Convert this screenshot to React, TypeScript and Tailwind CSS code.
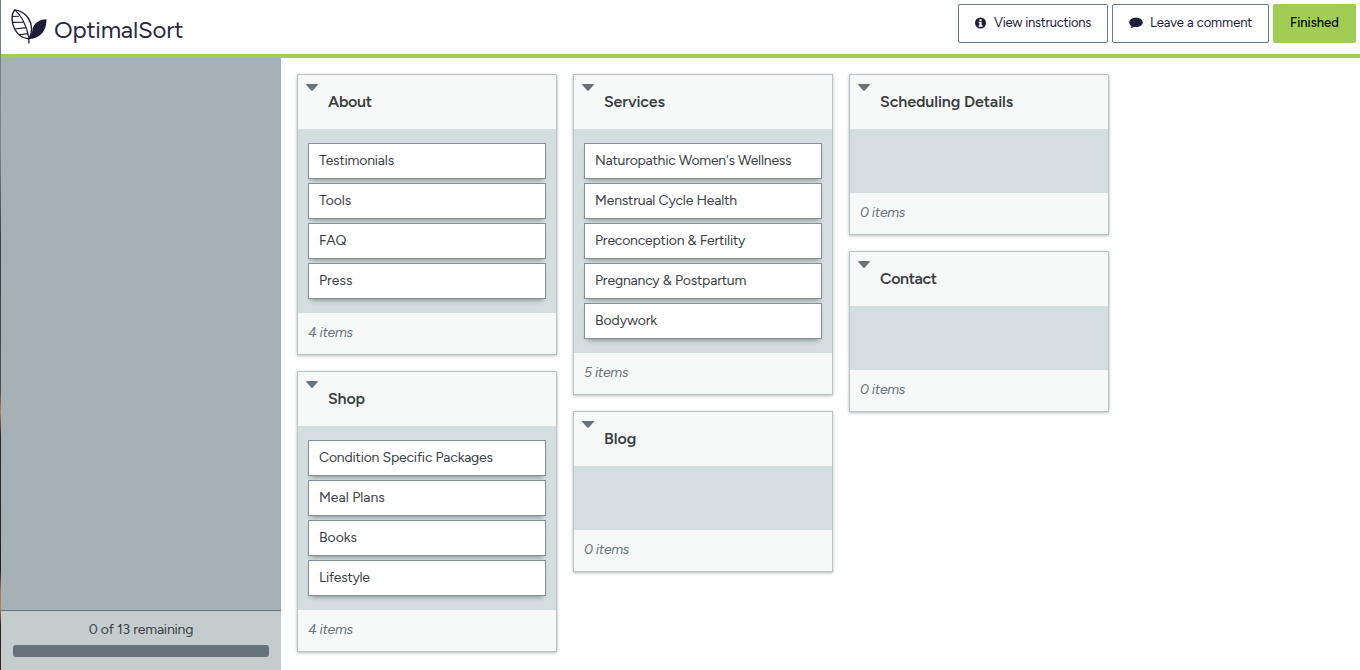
import React from "react";

type Item = { label: string; tracking: string };
type Group = { title: string; tracking: string; items: Item[] };

const columns: Group[][] = [
  [
    {
      title: "About",
      tracking: "tracking-[-0.3px]",
      items: [
        { label: "Testimonials", tracking: "tracking-[-0.2px]" },
        { label: "Tools", tracking: "tracking-[-0.1px]" },
        { label: "FAQ", tracking: "tracking-[-0.3px]" },
        { label: "Press", tracking: "tracking-[0px]" },
      ],
    },
    {
      title: "Shop",
      tracking: "tracking-[-0.2px]",
      items: [
        { label: "Condition Specific Packages", tracking: "tracking-[-0.19px]" },
        { label: "Meal Plans", tracking: "tracking-[0px]" },
        { label: "Books", tracking: "tracking-[0px]" },
        { label: "Lifestyle", tracking: "tracking-[-0.28px]" },
      ],
    },
  ],
  [
    {
      title: "Services",
      tracking: "tracking-[-0.15px]",
      items: [
        { label: "Naturopathic Women's Wellness", tracking: "tracking-[-0.23px]" },
        { label: "Menstrual Cycle Health", tracking: "tracking-[-0.18px]" },
        { label: "Preconception & Fertility", tracking: "tracking-[-0.2px]" },
        { label: "Pregnancy & Postpartum", tracking: "tracking-[-0.18px]" },
        { label: "Bodywork", tracking: "tracking-[-0.08px]" },
      ],
    },
    { title: "Blog", tracking: "tracking-[0px]", items: [] },
  ],
  [
    { title: "Scheduling Details", tracking: "tracking-[-0.09px]", items: [] },
    { title: "Contact", tracking: "tracking-[-0.4px]", items: [] },
  ],
];

function LeafLogo() {
  return (
    <svg width="36" height="36" viewBox="0 0 36 36" fill="none" className="shrink-0">
      <path
        d="M3.5.9C.5 5-.2 13.500 3.800 20.500C7 26 12 29.500 18 29.700C21.500 24 21.500 15.500 17.500 9.500C14 4.300 9 1.500 3.500.9Z"
        stroke="#1c1b3a"
        strokeWidth="1.400"
      />
      <path
        d="M3.500.9C9 5 15.500 15 18 29.700M1.200 7.500L8 7.200M1.200 13.400L12.200 13.200M3.300 20L15.200 18.600M8 25.800L17 24.600"
        stroke="#1c1b3a"
        strokeWidth="1.100"
      />
      <path
        d="M35.500 10.300C28 10.500 22.800 14.500 21.700 19.500C21.300 23 20.300 26.500 17.200 29.700V34.500H18.500V30C26 29.800 35.500 25 35.500 10.300Z"
        fill="#1c1b3a"
      />
    </svg>
  );
}

function InfoIcon() {
  return (
    <svg width="11" height="12" viewBox="0 0 11 12" className="shrink-0">
      <circle cx="5.500" cy="6" r="5.500" fill="#1c1b3a" />
      <path d="M4.400 2.200h2.200v1.700H4.400zM3.600 4.800h3v3.500h.9v1.400H3.600V8.300h.8V6.100h-.8z" fill="#fff" />
    </svg>
  );
}

function CommentIcon() {
  return (
    <svg width="14" height="12" viewBox="0 0 14 12" className="shrink-0">
      <path
        d="M7 .8C3.200.8.300 2.800.300 5.400c0 1.500.9 2.800 2.300 3.600-.2.900-.7 1.500-1.300 2.100 1.500 0 2.900-.6 3.900-1.400.6.100 1.200.2 1.800.2 3.800 0 6.700-2 6.700-4.500S10.800.8 7 .8z"
        fill="#1c1b3a"
      />
    </svg>
  );
}

function Card({ group }: { group: Group }) {
  return (
    <section className="flex w-[260px] flex-col border border-[#b5c5c8] bg-[#f7f9f8] shadow-[0_1px_3px_rgba(0,0,0,0.28)]">
      <header className="flex h-[54px] items-start pl-2">
        <svg width="12" height="7" viewBox="0 0 12 7" className="mt-[9px] shrink-0">
          <path d="M.6 0H11.400C12 0 12.100.5 11.700 1L7 6.300Q6 7.300 5 6.300L.3 1C-.1.500 0 0 .6 0Z" fill="#67737a" />
        </svg>
        <h2 className={`mt-[15px] ml-[10px] text-[16px] leading-6 font-semibold text-[#3b3e40] ${group.tracking}`}>
          {group.title}
        </h2>
      </header>
      <ul className="flex min-h-16 flex-col gap-1 bg-[#d4dddf] px-[10px] py-[14px]">
        {group.items.map((item) => (
          <li
            key={item.label}
            className={`h-9 border border-[#84919a] bg-white pl-[10px] text-[14px] leading-[33px] whitespace-nowrap text-[#3b4145] shadow-[0_4px_5px_-3px_rgba(0,0,0,0.38)] ${item.tracking}`}
          >
            {item.label}
          </li>
        ))}
      </ul>
      <footer className="h-[41px] pl-[10px] text-[14px] leading-[40px] tracking-[-0.3px] text-[#67737a] italic">
        {group.items.length} items
      </footer>
    </section>
  );
}

export default function App() {
  return (
    <div className="flex h-[670px] w-[1360px] overflow-hidden bg-white font-['Figtree','Proxima_Nova','Inter','Liberation_Sans',sans-serif]">
      <div className="w-px shrink-0 bg-[linear-gradient(to_bottom,#6c7e90_0px,#76879a_150px,#3d4049_240px,#514a4b_390px,#b08057_412px,#3b2924_435px,#291c20_570px,#9e7455_590px,#b98252_608px,#272719_625px,#42201e_670px)]" />
      <div className="flex min-w-0 flex-1 flex-col">
        <header className="flex h-[58px] shrink-0 justify-between border-b-4 border-[#a1cd56]">
          <div className="flex items-start pt-[9px] pl-[10px]">
            <LeafLogo />
            <span className="mt-[5px] ml-[7px] text-[24px] leading-8 tracking-[-0.2px] text-[#2b2945]">OptimalSort</span>
          </div>
          <div className="flex items-start gap-1 pt-1 pr-1 text-[13px] text-[#1c1b3a]">
            <button className="flex h-[39px] w-[150px] items-center rounded-[2px] border border-[#66788a] pb-[2px] pl-4">
              <InfoIcon />
              <span className="ml-2 tracking-[-0.23px] whitespace-nowrap">View instructions</span>
            </button>
            <button className="flex h-[39px] w-[157px] items-center rounded-[2px] border border-[#66788a] pb-[2px] pl-4">
              <CommentIcon />
              <span className="ml-[7px] tracking-[-0.06px] whitespace-nowrap">Leave a comment</span>
            </button>
            <button className="flex h-[39px] w-[83px] items-center justify-center rounded-[2px] bg-[#a1cd56] pb-[2px] font-medium text-black">
              Finished
            </button>
          </div>
        </header>
        <div className="flex flex-1">
          <aside className="flex w-[280px] shrink-0 flex-col bg-[#a6b1b6]">
            <div className="flex-1" />
            <div className="flex h-[60px] flex-col border-t border-[#67737a] bg-[#c5cccd] px-3">
              <p className="mt-[9px] text-center text-[14px] leading-5 tracking-[-0.2px] text-[#3b4145]">
                0 of 13 remaining
              </p>
              <div className="mt-[5px] h-3 rounded-[3px] bg-[#67737a]" />
            </div>
          </aside>
          <main className="flex items-start gap-4 p-4">
            {columns.map((groups, i) => (
              <div key={i} className="flex flex-col gap-4">
                {groups.map((group) => (
                  <Card key={group.title} group={group} />
                ))}
              </div>
            ))}
          </main>
        </div>
      </div>
    </div>
  );
}
